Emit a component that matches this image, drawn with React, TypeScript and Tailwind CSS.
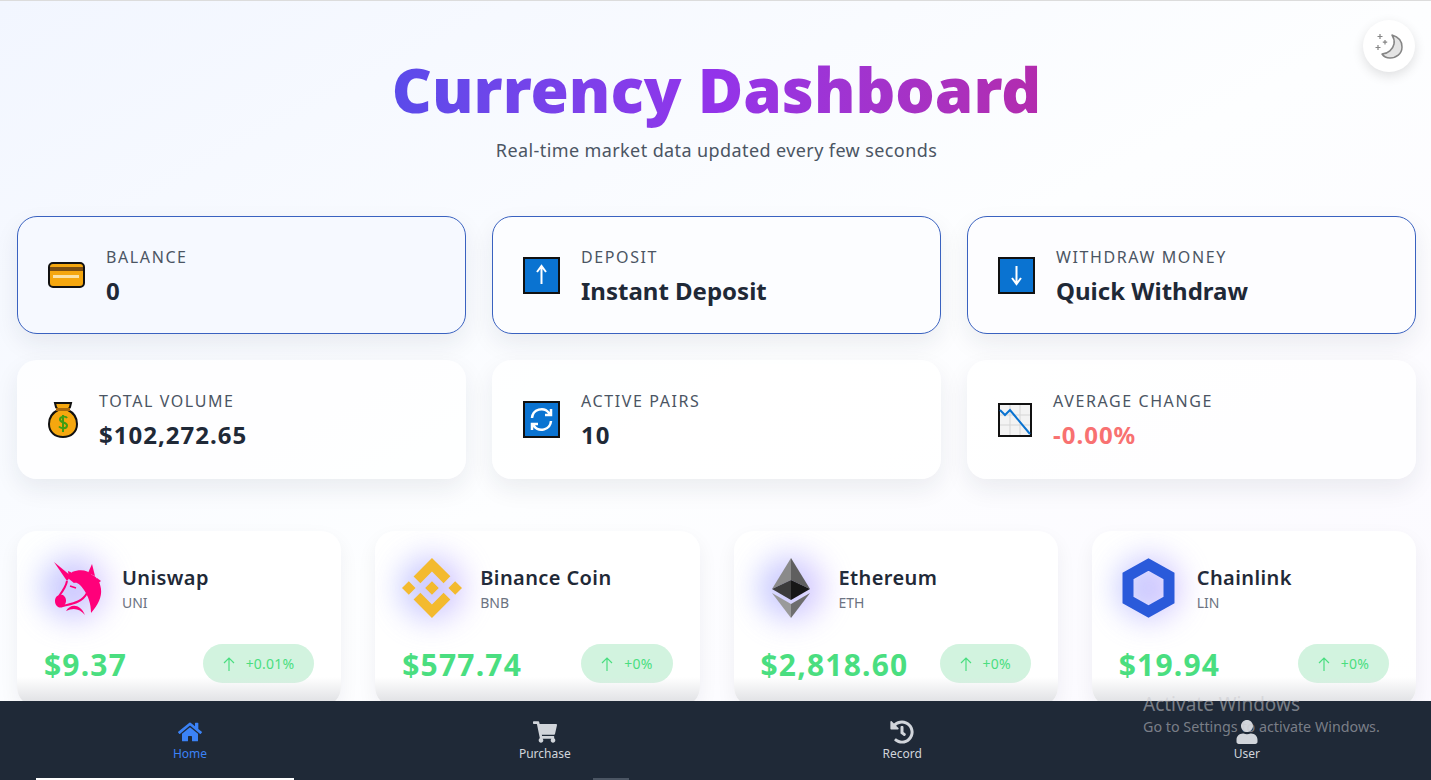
import React from "react";
import { FaHome, FaShoppingCart, FaHistory, FaUser } from "react-icons/fa";
import { SiBinance } from "react-icons/si";

const font = { fontFamily: '"Noto Sans", sans-serif' };

function Unicorn() {
  return (
    <svg width="56" height="54" viewBox="16 18 56 54" fill="#ff007a">
      <path d="M24 19L41 33 37 38Z" />
      <path d="M38 28L45 31 44 40 39 36Z" />
      <path d="M42 29C50 26 58 27 62 32C66 33 70 38 71 46C72 54 68 62 61 70C61 60 58 53 54 47C50 41 47 39 44 40C43 35 42 32 42 29Z" />
      <path d="M25 58C25 53 29 51 33 52C37 55 37 60 33 64C28 66 25 62 25 58Z" />
      <path d="M37 38C36 44 32 49 29 53" fill="none" stroke="#ff007a" strokeWidth="2" />
      <path d="M33 63C40 61 52 60 57 50" fill="none" stroke="#ff007a" strokeWidth="2" />
      <path d="M36 68C40 61 50 60 55 72C50 66 44 64 36 68Z" />
      <path d="M40 43L46 45" fill="none" stroke="#ff007a" strokeWidth="1.500" />
      <path d="M62 21L65 33 58 30Z" />
      <path d="M67 35L71 38 67 41Z" />
    </svg>
  );
}

function CardIcon() {
  return (
    <svg width="37" height="26" viewBox="0 0 37 26" className="shrink-0">
      <rect x="1" y="1" width="35" height="24" rx="4" fill="#f5a70f" stroke="#111" strokeWidth="2" />
      <rect x="2" y="5" width="33" height="4" fill="#7a4e12" />
      <rect x="5" y="13" width="26" height="3" fill="#fbe3a8" />
    </svg>
  );
}
function BagIcon() {
  return (
    <svg width="30" height="37" viewBox="0 0 30 37" className="shrink-0">
      <path d="M7 2h16l-1 4 -2 3c6 3 9 8 9 14 0 8-6 13-14 13S1 31 1 23c0-6 3-11 9-14L8 6z" fill="#f5a70f" stroke="#111" strokeWidth="2" />
      <rect x="8" y="7" width="14" height="3" fill="#a9690c" />
      <path d="M19 17c-1-2-7-2-7 1.500s7 2.500 7 6-6 3.500-8 1M15 14v17" fill="none" stroke="#3f9d12" strokeWidth="2" />
    </svg>
  );
}
function SquareIcon({ children }: { children: React.ReactNode }) {
  return (
    <svg width="37" height="37" viewBox="0 0 37 37" className="shrink-0">
      <rect x="1" y="1" width="35" height="35" fill="#0a73d1" stroke="#111" strokeWidth="2" />
      {children}
    </svg>
  );
}
function ChartIcon() {
  return (
    <svg width="34" height="34" viewBox="0 0 34 34" className="shrink-0">
      <rect x="1" y="1" width="32" height="32" fill="#f3f3f3" stroke="#111" strokeWidth="2" />
      <path d="M2 12h30M2 22h30M12 2v30M22 2v30" stroke="#d5d5d5" strokeWidth="1" />
      <path d="M2 7l5 5 5-5 20 24" fill="none" stroke="#0a73d1" strokeWidth="2" />
    </svg>
  );
}
function MoonIcon() {
  return (
    <svg width="28" height="25" viewBox="0 0 28 25" fill="none">
      <path d="M17 1C24 3 27 8 27 13C27 20 21 24 15 24C12 24 9 23 7 20C13 20 18 15 19 10C19.500 7 19 4 17 1Z" fill="#e4e4e4" stroke="#858585" strokeWidth="1.500" strokeLinejoin="round" />
      <path d="M5 0v5M2.500 2.500h5M10 6v4.500M7.800 8.200h4.400M3 11v5M.5 13.500h5" stroke="#858585" strokeWidth="1.200" />
    </svg>
  );
}

function StatCard({ icon, label, value, border, valueClass = "text-[#1f2937]", tint = "bg-white/80" }: { icon: React.ReactNode; label: string; value: string; border?: boolean; valueClass?: string; tint?: string }) {
  return (
    <div className={`flex items-center gap-[21px] rounded-[20px] shadow-[0_10px_25px_rgba(30,41,59,0.08)] ${tint} ${border ? "h-[118px] border border-[#3a62c0] pl-[30px]" : "h-[119px] pl-[31px]"}`}>
      {icon}
      <div className="flex flex-col">
        <span className="mt-[1px] text-base leading-[24px] tracking-[1.6px] text-[#4b5563] uppercase">{label}</span>
        <span className={`mt-[6px] text-2xl leading-[32px] font-bold ${valueClass}`}>{value}</span>
      </div>
    </div>
  );
}

function CoinCard({ logo, name, symbol, price, change }: { logo: React.ReactNode; name: string; symbol: string; price: string; change: string }) {
  return (
    <div className="relative h-[176px] overflow-hidden rounded-[20px] bg-white/90 p-[27px] shadow-[0_8px_20px_rgba(30,41,59,0.06)]">
      <div className="flex items-center gap-[18px]">
        <div className="relative flex h-[60px] w-[60px] shrink-0 items-center justify-center">
          <div className="absolute -inset-[2px] rounded-full bg-linear-to-r from-[#a9b4ff] to-[#c9b3ff] opacity-70 blur-[15px]" />
          <div className="relative">{logo}</div>
        </div>
        <div className="flex flex-col">
          <span className="text-xl leading-[28px] font-semibold tracking-[0.4px] text-[#1f2937]">{name}</span>
          <span className="mt-[1px] text-sm leading-[20px] text-[#6b7280]">{symbol}</span>
        </div>
      </div>
      <div className="mt-[26px] flex items-center justify-between">
        <span className="relative top-[1px] text-[30px] leading-[36px] font-bold tracking-[1.2px] text-[#4ade80]">{price}</span>
        <span className="flex h-[39px] items-center gap-[11px] rounded-full bg-[#d2f3df] px-[20px] text-sm tracking-[0.2px] text-[#4ade80]">
          <svg width="12" height="14" viewBox="0 0 12 14" fill="none" stroke="#4ade80" strokeWidth="1.200"><path d="M6 14V1M1 6l5-5 5 5" /></svg>
          {change}
        </span>
      </div>
      <div className="absolute inset-x-0 top-[146px] h-[24px] bg-linear-to-b from-transparent to-[#e2e3e6]" />
    </div>
  );
}

function NavItem({ icon, label, active }: { icon: React.ReactNode; label: string; active?: boolean }) {
  return (
    <div className={`flex flex-col items-center ${active ? "text-[#3b82f6]" : "text-[#d1d5db]"}`}>
      {icon}
      <span className="mt-[2px] text-xs leading-[16px]">{label}</span>
    </div>
  );
}

export default function App() {
  return (
    <div style={font} className="relative flex h-screen flex-col overflow-hidden border-t border-[#dcdcdc] bg-linear-to-br from-[#f2f6ff] via-[#fdfeff] to-[#fbf9ff]">
      <main className="flex-1 overflow-hidden pr-[15px] pl-[17px]">
        <header className="pt-[49px] text-center">
          <h1 className="mx-auto w-fit bg-linear-to-r from-[#5a4bea] via-[#9333ea] to-[#b32bad] bg-clip-text text-[62px] leading-[78px] font-black text-transparent">Currency Dashboard</h1>
          <p className="mt-[8px] text-lg leading-[28px] tracking-[0.4px] text-[#4b5563]">Real-time market data updated every few seconds</p>
        </header>
        <div className="mt-[52px] grid grid-cols-3 gap-[26px]">
          <StatCard icon={<CardIcon />} label="Balance" value="0" border tint="bg-[#f6f9ff]" />
          <StatCard icon={<SquareIcon><path d="M18.500 27V10M14 15l4.500-6 4.500 6" fill="none" stroke="#fff" strokeWidth="2" /></SquareIcon>} label="Deposit" value="Instant Deposit" border tint="bg-[#fcfdff]" />
          <StatCard icon={<SquareIcon><path d="M18.500 9v17M14 21l4.500 6 4.500-6" fill="none" stroke="#fff" strokeWidth="2" /></SquareIcon>} label="Withdraw Money" value="Quick Withdraw" border tint="bg-[#fdfdff]" />
          <StatCard icon={<BagIcon />} label="Total Volume" value="$102,272.65" valueClass="text-[#1f2937] tracking-[1px]" />
          <StatCard icon={<SquareIcon><path d="M9 17a9.500 9.500 0 0 1 17-5l2 2M28 20a9.500 9.500 0 0 1-17 5l-2-2M28 8v6h-6M9 29v-6h6" fill="none" stroke="#fff" strokeWidth="2.500" /></SquareIcon>} label="Active Pairs" value="10" valueClass="text-[#1f2937] tracking-[1px]" />
          <StatCard icon={<ChartIcon />} label="Average Change" value="-0.00%" valueClass="text-[#f87171] tracking-[1px]" />
        </div>
        <div className="mt-[52px] grid grid-cols-4 gap-[34px]">
          <CoinCard logo={<Unicorn />} name="Uniswap" symbol="UNI" price="$9.37" change="+0.01%" />
          <CoinCard logo={<SiBinance size={60} color="#f3ba2f" />} name="Binance Coin" symbol="BNB" price="$577.74" change="+0%" />
          <CoinCard
            logo={
              <svg width="38" height="60" viewBox="0 0 38 60">
                <path d="M19 0L0 31l19-9z" fill="#8a8a8a" />
                <path d="M19 0l19 31-19-9z" fill="#5f5f5f" />
                <path d="M19 22L0 31l19 11z" fill="#3c3c3c" />
                <path d="M19 22l19 9-19 11z" fill="#171717" />
                <path d="M0 35l19 25V46z" fill="#9a9a9a" />
                <path d="M38 35L19 60V46z" fill="#6e6e6e" />
              </svg>
            }
            name="Ethereum"
            symbol="ETH"
            price="$2,818.60"
            change="+0%"
          />
          <CoinCard
            logo={
              <svg width="53" height="60" viewBox="0 0 53 60">
                <path d="M26.500 6.500L47 18v24L26.500 53.500 6 42V18z" fill="none" stroke="#2a5ada" strokeWidth="11" />
              </svg>
            }
            name="Chainlink"
            symbol="LIN"
            price="$19.94"
            change="+0%"
          />
        </div>
      </main>
      <nav className="relative flex h-[79px] shrink-0 items-center justify-around bg-[#1f2937] pr-[15px] pl-[17px]">
        <NavItem active icon={<FaHome size={24} />} label="Home" />
        <NavItem icon={<FaShoppingCart size={24} />} label="Purchase" />
        <NavItem icon={<FaHistory size={24} />} label="Record" />
        <NavItem icon={<FaUser size={24} />} label="User" />
        <div className="absolute bottom-0 left-[36px] h-[2px] w-[258px] bg-white" />
        <div className="absolute bottom-0 left-[593px] h-[2px] w-[36px] bg-[#4b5563]" />
      </nav>
      <div className="pointer-events-none absolute top-[691px] left-[1143px] text-[rgba(200,200,205,0.55)]">
        <div className="text-[19px] leading-[24px]">Activate Windows</div>
        <div className="mt-[1px] text-[14.3px] leading-[20px]">Go to Settings to activate Windows.</div>
      </div>
      <button className="absolute top-[19px] right-[16px] flex h-[52px] w-[52px] items-center justify-center rounded-full bg-white shadow-[0_4px_12px_rgba(0,0,0,0.12)]">
        <MoonIcon />
      </button>
    </div>
  );
}
